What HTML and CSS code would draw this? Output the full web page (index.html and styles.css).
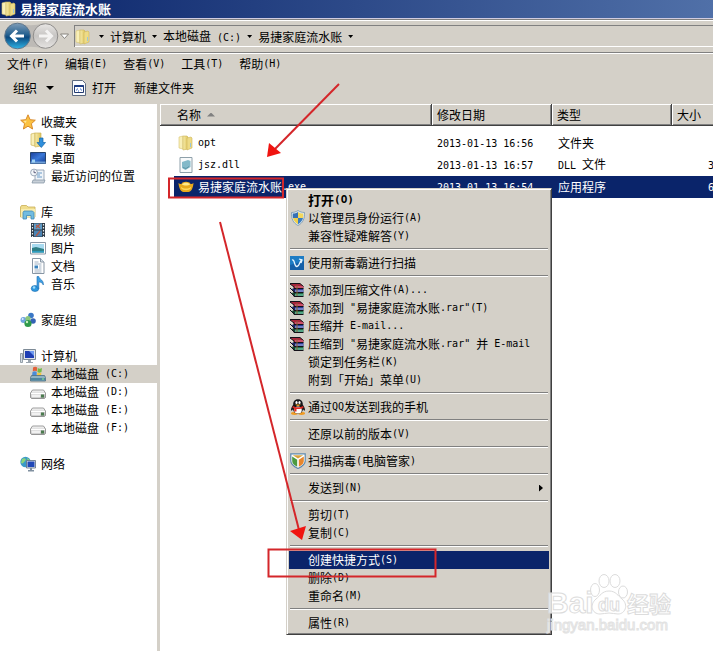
FILE: index.html
```html
<!DOCTYPE html>
<html lang="zh-CN">
<head>
<meta charset="utf-8">
<title>易捷家庭流水账</title>
<link rel="stylesheet" href="styles.css">
</head>
<body>
<svg class="defs" aria-hidden="true">
  <defs>
    <linearGradient id="gFold" x1="0" x2="1" y1="0" y2="0"><stop offset="0" stop-color="#f6ebaa"/><stop offset="1" stop-color="#e0c55c"/></linearGradient>
    <linearGradient id="gBack" x1="0" x2="0" y1="0" y2="1"><stop offset="0" stop-color="#7f9db8"/><stop offset=".45" stop-color="#24608f"/><stop offset=".55" stop-color="#0c4a80"/><stop offset="1" stop-color="#2fb4e6"/></linearGradient>
    <linearGradient id="gFwd" x1="0" x2="0" y1="0" y2="1"><stop offset="0" stop-color="#e8e6e4"/><stop offset=".5" stop-color="#c6c4c2"/><stop offset="1" stop-color="#e6e4e2"/></linearGradient>
    <linearGradient id="gScreen" x1="0" x2="1" y1="0" y2="1"><stop offset="0" stop-color="#1a3f9c"/><stop offset=".5" stop-color="#3a78d8"/><stop offset="1" stop-color="#123a90"/></linearGradient>
    <linearGradient id="gDrive" x1="0" x2="0" y1="0" y2="1"><stop offset="0" stop-color="#fafafa"/><stop offset="1" stop-color="#a8a8a8"/></linearGradient>
    <symbol id="folder" viewBox="0 0 16 16"><path d="M1 2l4-1v13l-4-1z" fill="#f8efb8" stroke="#d8c470" stroke-width=".6"/><path d="M5 1h4l1 1v12l-5 1z" fill="url(#gFold)" stroke="#cdb55a" stroke-width=".6"/><path d="M9 3l4-1 1 1v10l-5 2z" fill="#eedb85" stroke="#cdb55a" stroke-width=".6"/><path d="M12 8h1v4h-1z" fill="#9cc8d8"/></symbol>
    <symbol id="star" viewBox="0 0 16 16"><path d="M8 .8l2.1 4.9 5.2.5-3.9 3.5 1.2 5.3L8 12.2 3.400 15l1.200-5.300L.7 6.200l5.200-.5z" fill="#fbc241" stroke="#d98a2b"/><path d="M8 2.600L6.700 6.500l-3.400.4 2.500 2.200z" fill="#ffe79a"/></symbol>
    <symbol id="download" viewBox="0 0 16 16"><path d="M1 2l4-1v13l-4-1z" fill="#f8efb8" stroke="#cdb55a" stroke-width=".7"/><path d="M5 1h6v13l-6 1z" fill="url(#gFold)" stroke="#cdb55a" stroke-width=".7"/><path d="M9.500 6h3.500v4.500h2.500L11.300 15.500 7 10.500h2.500z" fill="#2f8fdc" stroke="#1565a8" stroke-width=".7"/></symbol>
    <symbol id="desktop" viewBox="0 0 16 16"><path d="M.5 2.500h15v11H.5z" fill="url(#gScreen)" stroke="#26446e"/><path d="M.5 11.500h15v2H.5z" fill="#6fa0d8"/><path d="M2 9.500h3v3H2z" fill="#9fd3f5"/></symbol>
    <symbol id="recent" viewBox="0 0 16 16"><path d="M5 2h9v11H5z" fill="#eef3f8" stroke="#8696a8" stroke-width=".8"/><path d="M7 5h5M7 7h3M7 9h5" stroke="#6a9bc8"/><path d="M3 12h12l-1 3H2z" fill="#c8d0d8" stroke="#8090a0" stroke-width=".7"/><circle cx="4" cy="4.500" r="3.400" fill="#f4f7fa" stroke="#8696a8" stroke-width=".8"/><path d="M4 2.500v2.200h2" fill="none" stroke="#446" stroke-width=".8"/></symbol>
    <symbol id="library" viewBox="0 0 16 16"><path d="M.5 3l1-1.500h5L8 3h7v10H.5z" fill="#f0dd8c" stroke="#c9ae55" stroke-width=".8"/><path d="M1 5h14v8H1z" fill="#f8edae"/><path d="M3 8.500l1-1.500h8.500l1.500 1.500V15h-3v-3.500H6.500V15H3z" fill="#72bce0" stroke="#3c88b8" stroke-width=".8"/></symbol>
    <symbol id="video" viewBox="0 0 16 16"><path d="M1 1h14v14H1z" fill="#2e3a46"/><path d="M4 1.500h8v6H4z" fill="#5e9cc8"/><path d="M4 8.500h8v6H4z" fill="#4a84b4"/><path d="M6 3l4 3M10 9l-4 5M10 2L6 6" stroke="#b05a48" stroke-width="1.300"/><path d="M2.500 2v13M13.500 2v13" stroke="#e8eef2" stroke-width="1.200" stroke-dasharray="1.500 1.500"/></symbol>
    <symbol id="picture" viewBox="0 0 16 16"><path d="M.5 2.500h15v11.500H.5z" fill="#fff" stroke="#8c98a6"/><path d="M2 4h12v8.500H2z" fill="#a8daf0"/><path d="M2 8l4-1 8 2v3.500H2z" fill="#2f7f86"/><path d="M2 11h12v1.500H2z" fill="#2d9cc0"/></symbol>
    <symbol id="document" viewBox="0 0 16 16"><path d="M2.500.500h8l3.500 3.500v11.500H2.500z" fill="#fff" stroke="#8896a4"/><path d="M10.500.500v3.500H14" fill="#d8e2ea" stroke="#8896a4"/><path d="M4.500 4h4M4.500 6h7M4.500 12h7M4.500 14h7M9 8h2.500M9 10h2.500" stroke="#8aa0b4" stroke-width=".8"/><path d="M4.500 7.500H8v3H4.500z" fill="#3d84bd"/></symbol>
    <symbol id="music" viewBox="0 0 16 16"><ellipse cx="5" cy="12.500" rx="3.800" ry="3" fill="#2f9ae0" stroke="#1a6aae" stroke-width=".6"/><path d="M7 12V.5h1.800c.4 2.800 5.400 3.800 4.500 8.500-1-2.600-3-3-4.500-3v6.500z" fill="#3ea0e4" stroke="#1a6aae" stroke-width=".6"/><circle cx="4" cy="11.500" r="1.200" fill="#a0dcfa"/></symbol>
    <symbol id="homegroup" viewBox="0 0 16 16"><circle cx="11" cy="3.500" r="2.800" fill="#3b78c6"/><circle cx="3.500" cy="8" r="3" fill="#6fa4de"/><circle cx="13" cy="9" r="2.800" fill="#3462b4"/><circle cx="8" cy="6.500" r="2.600" fill="#8cc87c"/><circle cx="8" cy="11.500" r="3.600" fill="#2f9a4a"/><circle cx="7" cy="10" r="1.200" fill="#c8f0c0"/><circle cx="2.700" cy="7" r="1" fill="#dcecff"/></symbol>
    <symbol id="computer" viewBox="0 0 16 16"><path d="M.5 5.500h2v9h-2z" fill="#d4dde4" stroke="#7d8a96" stroke-width=".8"/><path d="M3.500 1.500h12v10h-12z" fill="#dfe4ea" stroke="#7d8a96"/><path d="M5 3h9v7H5z" fill="#1f3fb4"/><path d="M9 3h5v5z" fill="#6f9af0"/><path d="M8 12h3v2h2v1H6v-1h2z" fill="#9aa4ae"/></symbol>
    <symbol id="sysdrive" viewBox="0 0 16 16"><path d="M3 1.500c1.500-1 3-1 4.200 0L6.800 5.500c-1.200-1-2.500-1-4 0z" fill="#e2603a"/><path d="M7.800 2c1.200 1 2.700 1 4.200 0l-.5 4c-1.500 1-2.900 1-4.100 0z" fill="#74b84a"/><path d="M2.500 6c1.500-1 3-1 4.200 0v4h-4.700z" fill="#4a8cd8"/><path d="M7.300 6.600c1.200 1 2.700 1 4.100 0l-.4 4H7z" fill="#f4c63c"/><path d="M1.500 9.500h13l1 2v3.500H.5v-3.500z" fill="#8fb2c2" stroke="#4e6d80" stroke-width=".8"/><path d="M1 12h14v2.500H1z" fill="#4f86a0"/><path d="M12 12.500h2v1h-2z" fill="#8cf08c"/></symbol>
    <symbol id="drive" viewBox="0 0 16 16"><path d="M2.500 6h11l2 3v4.500l-1 1h-13l-1-1V9z" fill="url(#gDrive)" stroke="#858585" stroke-width=".8"/><path d="M1 9.500h14" stroke="#fff"/><path d="M1.500 10.500h9v3h-9z" fill="#f1f1f1"/><path d="M11 10.500h3v3h-3z" fill="#4b7b4e"/></symbol>
    <symbol id="network" viewBox="0 0 16 16"><circle cx="5.500" cy="6" r="5.200" fill="#3a9ac8"/><path d="M2 3c3-2 5 0 3 2S3 8 1 7zM7 2l3 2-2 2z" fill="#8cd47a"/><path d="M6.500 4.500h9v7.500h-9z" fill="#dfe6ee" stroke="#5c6c80" stroke-width=".8"/><path d="M7.500 5.500h7v5.500h-7z" fill="#2048b8"/><path d="M10 12h2v2h2v1.500H8V14h2z" fill="#8090a0"/></symbol>
    <symbol id="dll" viewBox="0 0 16 16"><path d="M2 .500h12v15H2z" fill="#f8fafb" stroke="#8ea0aa"/><path d="M4 5l6-2 2.500 1v6l-5 3L4 11z" fill="#83b9c9"/><path d="M5 10.500l3 1 3-2" stroke="#5d97a8" fill="none"/></symbol>
    <symbol id="ingot" viewBox="0 0 16 16"><path d="M.5 4c2 2 3 1 4-.5C7 2.500 9 2.500 11.500 3.500c1 1.500 2 2.500 4 .5-.3 5-2.500 9-5 9h-5C3 13 .8 9 .5 4z" fill="#e8a91c"/><path d="M4 5.500c2 1.300 6 1.300 8 0C11 3 5 3 4 5.500z" fill="#ffe98a"/><path d="M3 8c3 2 7 2 10 0v1c-2 3-8 3-10 0z" fill="#ffd858"/></symbol>
    <symbol id="open" viewBox="0 0 14 16"><path d="M.5.500h10l3 3v12H.5z" fill="#fafcff" stroke="#5c6a80"/><path d="M2.500 5.500h9v7h-9z" fill="#fff" stroke="#223a70"/><path d="M2.500 5h9v2h-9z" fill="#1c3c84"/><path d="M4 10h1M5 9h1M8 9h1M9 10h1M6 11h1" stroke="#3264c8"/></symbol>
    <symbol id="shield" viewBox="0 0 16 16"><path d="M8 .500c2 1.500 4 1.800 6.500 2 .3 6-1.500 10.500-6.500 13C3 13 1.200 8.500 1.500 2.500 4 2.300 6 2 8 .500z" fill="#dce7ef" stroke="#7696ac" stroke-width=".8"/><path d="M8 2v6H3C2.600 6.500 2.700 5 2.800 3.600 4.500 3.500 6.500 3 8 2z" fill="#3671b5"/><path d="M8 2v6h5c.4-1.500.3-3 .2-4.400C11.500 3.500 9.500 3 8 2z" fill="#f3d75c"/><path d="M8 8v6.200C5.400 12.800 3.700 10.800 3 8z" fill="#efcf4c"/><path d="M8 8v6.200C10.600 12.800 12.300 10.800 13 8z" fill="#3a7cc0"/></symbol>
    <symbol id="duba" viewBox="0 0 14 14"><path d="M0 0h14v14H0z" fill="#1560a8"/><path d="M0 0h14v5L0 9z" fill="#1d7cc4"/><path d="M2 4c3-1 2 7 5 6.500S9.500 4 12 4M9 3l3 1-1 3" fill="none" stroke="#e8f6ff" stroke-width="1.300"/></symbol>
    <symbol id="rar" viewBox="0 0 14 14"><path d="M0 .5h10l3.500 3V5H4z" fill="#a8263a"/><path d="M0 1l4 3v1.500L1 4zM0 5l4 3v1L1 8zM0 9l4 3v1l-3-2z" fill="#f0e8d8"/><path d="M4 5.500h9.500V9H4L1 6z" fill="#2b3c98"/><path d="M4 9.500h9.500V13H4l-3-3z" fill="#1f6a44"/><path d="M0 .5h10l3.500 3M4 5.500h9.500M4 9.500h9.500M4 13.500h9.500M0 1l4 3M0 5l4 4M0 9l4 4M4 4v9.500" stroke="#141018" fill="none"/><path d="M5 4h8" stroke="#f07c9c"/><path d="M5 8h8" stroke="#b8c4f0"/><path d="M5 12h8" stroke="#88e0c8"/><path d="M6 2h2v11H6z" fill="#8a6238" opacity=".5"/></symbol>
    <symbol id="qq" viewBox="0 0 16 16"><ellipse cx="4.500" cy="14.500" rx="3.500" ry="1.400" fill="#f09a22"/><ellipse cx="11.500" cy="14.500" rx="3.500" ry="1.400" fill="#f09a22"/><path d="M8 .3c3.500 0 5 2.500 4.800 5.500 1.500 2 2.700 4.500 2 6-.8 0-1.300-.8-1.800-1.500-.3 2.500-2 4.400-5 4.400s-4.700-1.900-5-4.400c-.5.700-1 1.500-1.800 1.500-.7-1.500.5-4 2-6C3 2.800 4.500.3 8 .3z" fill="#16161a"/><ellipse cx="8" cy="11" rx="3.800" ry="3.600" fill="#fff"/><ellipse cx="6.500" cy="3.500" rx="1.100" ry="1.500" fill="#fff"/><ellipse cx="9.500" cy="3.500" rx="1.100" ry="1.500" fill="#fff"/><path d="M5 5.500h6L8 7.300z" fill="#f5a623"/><path d="M2.800 7c3 1.800 7.500 1.800 10.400 0l.3 2c-2 1-5 1.200-7 1v2.500H4.300V9.500L2.500 9z" fill="#e02a22"/></symbol>
    <symbol id="guard" viewBox="0 0 16 16"><path d="M.800.800h14.400V8c0 4-4 6-7.200 7.500C4.800 14 .8 12 .8 8z" fill="#fff" stroke="#5d88ac" stroke-width="1.200"/><path d="M2.800 2.200h10.400L8 5.600z" fill="#d8a33c"/><path d="M2.200 3.400L7.200 6.800v7C4 12 2.200 10.500 2.200 8z" fill="#4c9a3e"/><path d="M13.800 3.400L8.800 6.800v7c3.200-1.800 5-3.300 5-5.800z" fill="#e8862c"/></symbol>
  </defs>
</svg>

<header class="titlebar">
  <svg class="ico"><use href="#folder"/></svg>
  <h1>易捷家庭流水账</h1>
</header>

<div class="addressbar">
  <div class="travel">
    <svg width="70" height="30" viewBox="0 0 70 30" aria-hidden="true">
      <path d="M17 2c9 3 17 3 26 0v26c-9-3-17-3-26 0z" fill="#bdbab6"/>
      <circle cx="16.500" cy="15" r="12.800" fill="url(#gBack)" stroke="#60778c"/>
      <path d="M23 15H11M16 9.500L10.500 15l5.500 5.500" fill="none" stroke="#fff" stroke-width="3"/>
      <circle cx="44.500" cy="15" r="12.300" fill="url(#gFwd)" stroke="#8f8d8b"/>
      <path d="M38 15h12M45 9.500l5.500 5.500-5.500 5.500" fill="none" stroke="#f4f3f2" stroke-width="3"/>
      <path d="M59.500 13h8l-4 4.500z" fill="#fff" stroke="#88857f"/>
    </svg>
  </div>
  <nav class="crumbs" aria-label="地址">
    <svg class="ico"><use href="#folder"/></svg>
    <i class="down"></i>
    <a href="#">计算机</a><i class="down"></i>
    <a href="#">本地磁盘<span class="en"> (C:)</span></a><i class="down"></i>
    <a href="#">易捷家庭流水账</a><i class="down"></i>
  </nav>
</div>

<div class="menubar">
  <button>文件<span class="en">(F)</span></button>
  <button>编辑<span class="en">(E)</span></button>
  <button>查看<span class="en">(V)</span></button>
  <button>工具<span class="en">(T)</span></button>
  <button>帮助<span class="en">(H)</span></button>
</div>

<div class="toolbar">
  <button>组织<i class="down big"></i></button>
  <button><svg class="ico-open"><use href="#open"/></svg>打开</button>
  <button>新建文件夹</button>
</div>

<main class="content">
  <nav class="tree" aria-label="导航窗格">
    <section>
      <a href="#" class="root"><svg class="ico"><use href="#star"/></svg>收藏夹</a>
      <a href="#"><svg class="ico"><use href="#download"/></svg>下载</a>
      <a href="#"><svg class="ico"><use href="#desktop"/></svg>桌面</a>
      <a href="#"><svg class="ico"><use href="#recent"/></svg>最近访问的位置</a>
    </section>
    <section>
      <a href="#" class="root"><svg class="ico"><use href="#library"/></svg>库</a>
      <a href="#"><svg class="ico"><use href="#video"/></svg>视频</a>
      <a href="#"><svg class="ico"><use href="#picture"/></svg>图片</a>
      <a href="#"><svg class="ico"><use href="#document"/></svg>文档</a>
      <a href="#"><svg class="ico"><use href="#music"/></svg>音乐</a>
    </section>
    <section>
      <a href="#" class="root"><svg class="ico"><use href="#homegroup"/></svg>家庭组</a>
    </section>
    <section>
      <a href="#" class="root"><svg class="ico"><use href="#computer"/></svg>计算机</a>
      <a href="#" class="current"><svg class="ico"><use href="#sysdrive"/></svg>本地磁盘<span class="en"> (C:)</span></a>
      <a href="#"><svg class="ico"><use href="#drive"/></svg>本地磁盘<span class="en"> (D:)</span></a>
      <a href="#"><svg class="ico"><use href="#drive"/></svg>本地磁盘<span class="en"> (E:)</span></a>
      <a href="#"><svg class="ico"><use href="#drive"/></svg>本地磁盘<span class="en"> (F:)</span></a>
    </section>
    <section>
      <a href="#" class="root"><svg class="ico"><use href="#network"/></svg>网络</a>
    </section>
  </nav>

  <div class="files">
    <table>
      <colgroup><col class="c-name"><col class="c-date"><col class="c-type"><col></colgroup>
      <thead>
        <tr><th>名称<i class="sort"></i></th><th>修改日期</th><th>类型</th><th>大小</th></tr>
      </thead>
      <tbody>
        <tr><td><span class="file"><svg class="ico"><use href="#folder"/></svg><span class="en">opt</span></span></td><td><span class="en">2013-01-13 16:56</span></td><td>文件夹</td><td></td></tr>
        <tr><td><span class="file"><svg class="ico"><use href="#dll"/></svg><span class="en">jsz.dll</span></span></td><td><span class="en">2013-01-13 16:57</span></td><td><span class="en">DLL </span>文件</td><td class="size"><span class="en">3</span></td></tr>
        <tr class="selected"><td><span class="file"><svg class="ico"><use href="#ingot"/></svg>易捷家庭流水账<span class="en">.exe</span></span></td><td><span class="en">2013-01-13 16:54</span></td><td>应用程序</td><td class="size"><span class="en">6</span></td></tr>
      </tbody>
    </table>
  </div>
</main>

<div class="context" role="menu">
  <button class="default">打开<span class="en">(O)</span></button>
  <button><svg class="ico"><use href="#shield"/></svg>以管理员身份运行<span class="en">(A)</span></button>
  <button>兼容性疑难解答<span class="en">(Y)</span></button>
  <hr>
  <button><svg class="ico-small"><use href="#duba"/></svg>使用新毒霸进行扫描</button>
  <hr>
  <button><svg class="ico-small"><use href="#rar"/></svg>添加到压缩文件<span class="en">(A)...</span></button>
  <button><svg class="ico-small"><use href="#rar"/></svg>添加到<span class="en"> "</span>易捷家庭流水账<span class="en">.rar"(T)</span></button>
  <button><svg class="ico-small"><use href="#rar"/></svg>压缩并<span class="en"> E-mail...</span></button>
  <button><svg class="ico-small"><use href="#rar"/></svg>压缩到<span class="en"> "</span>易捷家庭流水账<span class="en">.rar" </span>并<span class="en"> E-mail</span></button>
  <button>锁定到任务栏<span class="en">(K)</span></button>
  <button>附到「开始」菜单<span class="en">(U)</span></button>
  <hr>
  <button><svg class="ico"><use href="#qq"/></svg>通过<span class="en">QQ</span>发送到我的手机</button>
  <hr>
  <button>还原以前的版本<span class="en">(V)</span></button>
  <hr>
  <button><svg class="ico"><use href="#guard"/></svg>扫描病毒<span class="en">(</span>电脑管家<span class="en">)</span></button>
  <hr>
  <button>发送到<span class="en">(N)</span><i class="more"></i></button>
  <hr>
  <button>剪切<span class="en">(T)</span></button>
  <button>复制<span class="en">(C)</span></button>
  <hr>
  <button class="active">创建快捷方式<span class="en">(S)</span></button>
  <button>删除<span class="en">(D)</span></button>
  <button>重命名<span class="en">(M)</span></button>
  <hr>
  <button>属性<span class="en">(R)</span></button>
</div>

<svg class="notes" width="713" height="651" viewBox="0 0 713 651">
  <g class="mark">
    <text x="547" y="613" class="brand">Bai</text>
    <text x="627" y="612" class="brand-cn">经验</text>
    <ellipse cx="595" cy="590" rx="4.500" ry="6.500"/>
    <ellipse cx="604" cy="581" rx="5" ry="6.500"/>
    <ellipse cx="615" cy="581" rx="5" ry="6.500"/>
    <ellipse cx="623" cy="592" rx="4.500" ry="6"/>
    <path d="M609 591c7 0 9 5 13 8 7 6 3 15-4 15-3 0-6-1-9-1s-6 1-9 1c-8 0-11-9-4-15 4-3 6-8 13-8z"/>
    <text x="598" y="611" class="brand-du">du</text>
    <text x="547" y="630" class="site">jingyan.baidu.com</text>
  </g>
  <g class="red-line">
    <path d="M339 84L275 149"/>
    <path d="M220 222L299 530"/>
    <path d="M169 178.500h114v19H169z"/>
    <path d="M268.500 549.500h167v27h-167z"/>
  </g>
  <g class="red-head">
    <path d="M267 157l2-14 12 10z"/>
    <path d="M302 540l-12-9 16-5z"/>
  </g>
</svg>
</body>
</html>
```
FILE: styles.css
```css
* {
  box-sizing: border-box;
}

body {
  margin: 0;
  min-height: 100vh;
  display: flex;
  flex-direction: column;
  position: relative;
  overflow: hidden;
  background: #d4d0c8;
  color: #000;
  font: 12px/18px "Noto Sans CJK SC", sans-serif;
}

button {
  border: 0;
  padding: 0;
  background: none;
  color: inherit;
  font: inherit;
  display: flex;
  align-items: center;
}

a {
  color: inherit;
  text-decoration: none;
}

.defs {
  position: absolute;
  width: 0;
  height: 0;
}

.en {
  font-family: "DejaVu Sans Mono", monospace;
  font-size: 10px;
  white-space: pre;
}

.ico {
  width: 16px;
  height: 16px;
  flex: none;
}

.ico-small {
  width: 14px;
  height: 14px;
  flex: none;
}

.down {
  width: 5px;
  height: 3px;
  background: #000;
  clip-path: polygon(0 0, 100% 0, 50% 100%);
}

.down.big {
  width: 8px;
  height: 4px;
  margin-left: 9px;
}

/* Title bar */
.titlebar {
  height: 18px;
  padding-left: 1px;
  display: flex;
  align-items: center;
  gap: 3px;
  background: linear-gradient(90deg, #0a246a, #5070a8);
  color: #fff;
}

.titlebar h1 {
  margin: 0;
  font-size: 13px;
  line-height: 18px;
}

/* Address bar */
.addressbar {
  height: 36px;
  display: flex;
  align-items: center;
  padding-left: 1px;
  border-top: 1px solid #d0cce0;
  border-bottom: 1px solid #fff;
  box-shadow: inset 0 1px #808080, inset 0 2px #fff, inset 0 -1px #808080;
}

.travel {
  width: 73px;
  display: flex;
}

.crumbs {
  flex: 1;
  height: 22px;
  display: flex;
  align-items: center;
  gap: 6px;
  border: solid #808080;
  border-width: 1px 0 0 1px;
  box-shadow: inset 0 -1px #fff;
}

.crumbs .ico {
  margin-right: 2px;
}

/* Menu and tool bars */
.menubar {
  height: 20px;
  padding-left: 7px;
  display: flex;
  gap: 16px;
}

.toolbar {
  height: 30px;
  padding: 0 13px 2px;
  display: flex;
  gap: 18px;
}

.ico-open {
  width: 14px;
  height: 16px;
  margin-right: 6px;
}

/* Content */
.content {
  flex: 1;
  display: flex;
}

.tree {
  flex: none;
  width: 157px;
  padding-top: 9px;
  background: #fff;
}

.tree section {
  margin-bottom: 18px;
}

.tree a {
  height: 18px;
  padding-left: 30px;
  display: flex;
  align-items: center;
}

.tree .ico {
  margin-right: 5px;
}

.tree .root {
  padding-left: 20px;
}

.tree .current {
  background: #d4d0c8;
}

.files {
  flex: 1;
  min-width: 0;
  margin-left: 3px;
  background: #fff;
}

table {
  width: 100%;
  table-layout: fixed;
  border-collapse: separate;
  border-spacing: 0;
}

.c-name {
  width: 272px;
}

.c-date,
.c-type {
  width: 120px;
}

th {
  height: 22px;
  padding: 0 0 0 5px;
  background: #d4d0c8;
  border: solid #404040;
  border-width: 0 1px 1px 0;
  box-shadow: inset 1px 1px #fff, inset -1px -1px #808080;
  text-align: left;
  font-weight: normal;
}

th:first-child {
  padding-left: 17px;
}

th:last-child {
  border-right: 0;
  box-shadow: inset 1px 1px #fff, inset 0 -1px #808080;
}

.sort {
  display: inline-block;
  width: 8px;
  height: 4px;
  margin-left: 6px;
  vertical-align: 3px;
  background: #808080;
  clip-path: polygon(50% 0, 100% 100%, 0 100%);
}

tbody::before {
  content: "";
  display: block;
  height: 6px;
}

td {
  height: 22px;
  padding: 0 0 0 5px;
  white-space: nowrap;
}

td:nth-child(3) {
  padding-left: 6px;
}

td:first-child {
  padding-left: 14px;
}

.file {
  height: 22px;
  padding-left: 4px;
  display: flex;
  align-items: center;
}

.file .ico {
  margin-right: 4px;
}

.size {
  padding-left: 36px;
  overflow: hidden;
}

.selected {
  color: #fff;
}

.selected td {
  background: #0a246a;
}

.selected td:first-child {
  background: linear-gradient(90deg, #fff 14px, #0a246a 14px);
}

/* Context menu */
.context {
  position: absolute;
  left: 286px;
  top: 188px;
  width: 266px;
  padding: 2px;
  background: #d4d0c8;
  border: 1px solid;
  border-color: #d4d0c8 #404040 #404040 #d4d0c8;
  box-shadow: inset 1px 1px #fff, inset -1px -1px #808080;
}

.context button {
  width: 100%;
  height: 18px;
  padding-left: 19px;
}

.context .default {
  font-size: 13px;
  font-weight: bold;
}

.context .default .en {
  font-size: 11px;
}

.context .ico {
  margin: 0 2px 0 -18px;
}

.context .ico-small {
  margin: 0 4px 0 -18px;
}

.context .active {
  background: #0a246a;
  color: #fff;
}

.context hr {
  height: 2px;
  margin: 3px 1px 4px;
  border: solid;
  border-width: 1px 0;
  border-color: #808080 transparent #fff;
}

.more {
  width: 4px;
  height: 7px;
  margin: 0 6px 0 auto;
  background: currentColor;
  clip-path: polygon(0 0, 100% 50%, 0 100%);
}

/* Annotations over the window */
.notes {
  position: absolute;
  left: 0;
  top: 0;
  pointer-events: none;
}

.red-line {
  fill: none;
  stroke: #d4262a;
  stroke-width: 2;
}

.red-head {
  fill: #f01410;
}

.mark {
  fill: #fff;
  fill-opacity: 0.8;
  stroke: #dcdcdc;
  stroke-width: 1;
  font-family: "Liberation Sans", sans-serif;
}

.brand {
  font-size: 30px;
  font-weight: bold;
}

.brand-cn {
  font: bold 22px "Noto Sans CJK SC", sans-serif;
}

.brand-du {
  font-size: 18px;
  font-weight: bold;
}

.site {
  font-size: 15px;
  stroke: #e2e2e2;
}
```
